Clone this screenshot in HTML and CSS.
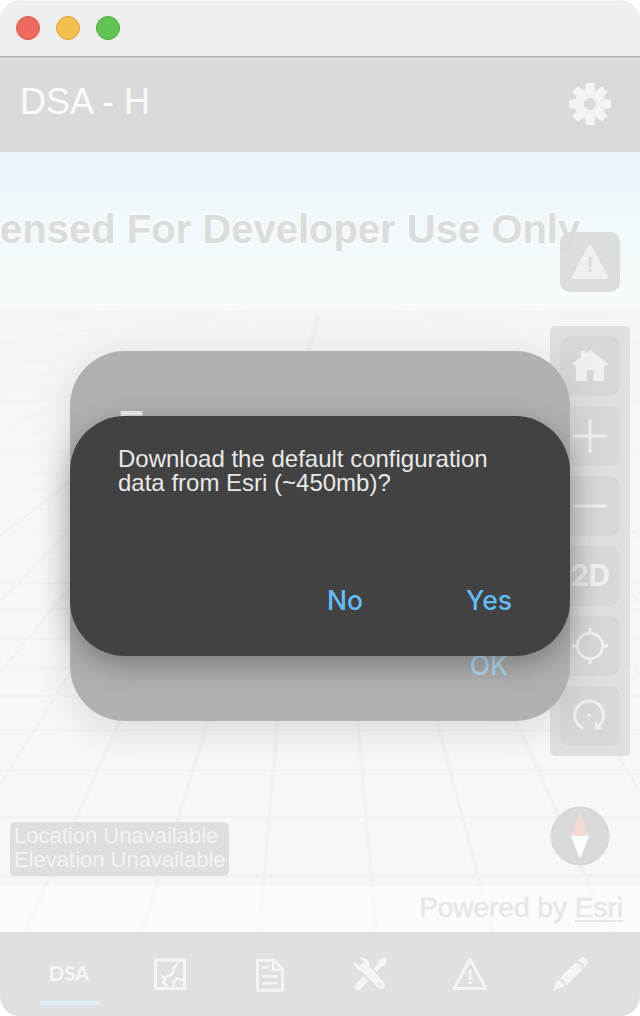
FILE: index.html
```html
<!DOCTYPE html>
<html lang="en">
<head>
<meta charset="utf-8">
<title>DSA - H</title>
<link rel="stylesheet" href="styles.css">
</head>
<body>
<div class="window">
  <div class="titlebar"><span class="light close"></span><span class="light minimize"></span><span class="light expand"></span></div>
  <header class="header">
    <h1 class="title">DSA - H</h1>
    <svg class="gear" viewBox="-22 -22 44 44">
      <circle r="10.3" fill="none" stroke="currentColor" stroke-width="8.4"/>
      <g fill="currentColor">
        <path id="tooth" d="M-5.500-12L-4-20.500Q-4-21-3.500-21H3.500Q4-21 4-20.500L5.500-12z"/>
        <use href="#tooth" transform="rotate(45)"/><use href="#tooth" transform="rotate(90)"/><use href="#tooth" transform="rotate(135)"/><use href="#tooth" transform="rotate(180)"/><use href="#tooth" transform="rotate(225)"/><use href="#tooth" transform="rotate(270)"/><use href="#tooth" transform="rotate(315)"/>
      </g>
    </svg>
  </header>
  <main class="scene">
    <svg class="grid" viewBox="0 152 640 780">
      <g class="lines far">
        <path d="M0 321Q60 314 120 311M0 344Q110 325 248 310M0 372L170 322M140 350Q175 337 210 328M0 396L95 352M0 433L70 394M0 487L70 437M640 321Q570 314 520 311M640 344Q530 325 392 310M640 372L470 322M500 350Q465 337 425 328M640 396L545 352M640 433L570 394M640 487L570 437"/>
        <path d="M0 342H640M0 352H640M0 362H640M0 374H640M0 387H640M0 401H640M0 416H640M0 433H640M0 452H640M0 473H640M0 490H640M0 510H640M0 531H640M0 553H640"/>
      </g>
      <g class="lines near">
        <path class="rows" d="M0 583H640M0 609H640M0 639H640M0 668H640M0 696H640M0 730H640M0 770H640M0 817H640"/>
        <path d="M0 536L70 482M0 601L70 530M0 672L70 588M0 785L115 600M640 792L524 600M640 676L570 592M640 603L570 532M640 537L570 483"/>
        <path class="mid" d="M25 932L160 631M142 932L237 631M259 932L286 631M376 932L350 631M493 932L413 631M610 932L476 631"/>
        <path class="mid" d="M0 875.500H640"/>
        <path class="apex" d="M316 315H322L311 351H305z"/>
      </g>
    </svg>
    <div class="watermark">ensed For Developer Use Only</div>
    <button class="tool alert"><svg viewBox="0 0 60 60"><path fill="currentColor" stroke="currentColor" stroke-width="4" stroke-linejoin="round" d="M30 14.800L46 45H14z"/><path class="cut" d="M28.500 25h3v10h-3zM28.500 37.300h3v2.700h-3z"/></svg></button>
    <div class="toolbar">
      <button class="tool"><svg viewBox="0 0 60 60"><path fill="currentColor" d="M30 14L47.700 27.500L45.700 30L44 28.800V45H33.300V34H27V45H16V28.800L14.300 30L12.300 27.500L21 20.900V15H25.500V17.400z"/></svg></button>
      <button class="tool"><svg viewBox="0 0 60 60"><path class="stroke" d="M13.500 30h33M30 13.300v33.400"/></svg></button>
      <button class="tool"><svg viewBox="0 0 60 60"><path class="stroke" d="M13.500 30h33"/></svg></button>
      <button class="tool mode">2D</button>
      <button class="tool"><svg viewBox="0 0 60 60"><g class="stroke"><circle cx="30" cy="30" r="12.700"/><path d="M30 12v6M30 42v6M12 30h6M42 30h6"/></g></svg></button>
      <button class="tool"><svg viewBox="0 0 60 60"><path class="stroke" d="M23.200 42.300A14.300 14.300 0 1 1 37.300 41"/><path fill="currentColor" d="M35.300 35.300L42.700 43.200L34.500 43.500zM27.800 27.800h3v3h-3z"/></svg></button>
    </div>
    <div class="location"><div class="lat">Location Unavailable</div><div class="elev">Elevation Unavailable</div></div>
    <svg class="compass" viewBox="-30 -30 60 60"><circle r="29.500"/><path class="north" d="M-9 0L0-23.500L9 0z"/><path class="south" d="M-9 0L0 23.500L9 0z"/></svg>
    <div class="attribution"><span class="credit">Powered by <u>Esri</u></span></div>
  </main>
  <nav class="tabs">
    <a class="tab active">DSA</a>
    <a class="tab"><svg viewBox="0 0 40 40"><g class="stroke"><rect x="5.500" y="6" width="29" height="28.500"/><path class="thin" d="M28.300 7.500L26 11.500L23.700 14L23.300 17L21.500 21L18 21.500L16 23.500L12.700 22.500L15 26L13 28.500L16.500 31L16 33.500M23.300 33.500L23.800 28L27.300 24L30 26L33 25.500"/></g></svg></a>
    <a class="tab"><svg viewBox="0 0 40 40"><g class="stroke"><path d="M7.500 6.200H23.500L32.600 15V36.200H7.500z"/><path class="thin" d="M23.200 7V15.700H32M12 13.500h6.500M12 22.300h15.700M12 29.200h15.700"/></g></svg></a>
    <a class="tab"><svg viewBox="0 0 40 40"><g stroke="currentColor" fill="none"><path stroke-width="7" stroke-linecap="round" d="M8 32.500L16 24.500"/></g><path fill="currentColor" d="M22.500 15.800L27.700 10.500L28.500 6.500L34.500 2.800L37.500 6L34 12L30.700 13L25.500 18.800z"/><path class="halo" d="M15 14L31 31.500"/><path fill="none" stroke="currentColor" stroke-width="8.500" stroke-linecap="round" d="M14 13L30.800 31.200"/><path fill="currentColor" d="M9 3.800A8.600 8.600 0 0 1 19.500 13.500L13 17.500A8.600 8.600 0 0 1 4.300 7.500L9.500 12L13.300 11.500L14 7.500z"/><circle class="cut" cx="30" cy="30.500" r="1.400"/></svg></a>
    <a class="tab"><svg viewBox="0 0 40 40"><path class="stroke round" d="M20 5.300L35.800 34.500H4.200z"/><path fill="currentColor" d="M18.500 15.300h3v10.300h-3z"/><circle fill="currentColor" cx="20" cy="28.800" r="1.800"/></svg></a>
    <a class="tab"><svg viewBox="0 0 40 40"><path fill="currentColor" d="M2.700 37.300L7 26Q12 26.500 14.700 32zM9.700 24.500L25.500 8.700Q31 9 32.700 15.500L17 31Q14.500 26 9.700 24.500zM27.300 6.800L30 4.200Q33 1.500 36 4.500Q39 7.500 36.700 11L34.300 13.500Q32.500 8 27.300 6.800z"/></svg></a>
  </nav>
  <section class="dialog under"><div class="heading">E</div><button class="action ok">OK</button></section>
  <section class="dialog prompt">
    <p class="message">Download the default configuration<br>data from Esri (~450mb)?</p>
    <div class="actions"><button class="action">No</button><button class="action">Yes</button></div>
  </section>
</div>
</body>
</html>
```
FILE: styles.css
```css
* { box-sizing: border-box; }
body { margin: 0; background: #fff; font-family: "Liberation Sans", Arial, sans-serif; }
button { border: 0; padding: 0; margin: 0; background: none; font: inherit; color: inherit; }
.window { position: relative; width: 640px; height: 1016px; border-radius: 20px; overflow: hidden; display: flex; flex-direction: column; background: #f6f6f6; }
.titlebar { height: 57px; flex: none; display: flex; gap: 16px; padding: 16px; background: #efefef; border-bottom: 1px solid #b2b2b2; box-shadow: inset 0 1px #f7f7f7; }
.light { width: 24px; height: 24px; border-radius: 50%; border: 1px solid; }
.close { background: #ed6a5e; border-color: #d5564c; }
.minimize { background: #f5bf4f; border-color: #d8a243; }
.expand { background: #61c554; border-color: #4ea73e; }
.header { height: 95px; flex: none; display: flex; justify-content: space-between; align-items: flex-start; padding: 23px 28px 0 20px; background: #dadada; border-top: 1px solid #cecece; color: #fafafa; }
.title { margin: 0; font-size: 36px; font-weight: 400; line-height: 42px; }
.gear { width: 44px; height: 44px; margin-top: 1px; color: #f4f4f4; }
.scene { position: relative; height: 780px; flex: none; overflow: hidden; background: linear-gradient(#ebf3fc 0, #ecf4fa 22px, #eef7fa 45px, #f2f9fc 90px, #f5fafb 125px, #f7fbfb 158px, #f5f5f5 158px, #f7f7f7 320px); }
.grid { position: absolute; inset: 0; width: 640px; height: 780px; }
.lines { fill: none; stroke: #f1f1f1; }
.far { stroke-width: 1; stroke: #f3f3f3; }
.near { stroke-width: 2.5; }
.rows { stroke-width: 2; stroke: #f2f2f2; }
.mid { stroke-width: 4; }
.apex { fill: #f0f0f0; stroke: none; }
.watermark { position: absolute; left: 0; top: 54px; white-space: nowrap; font-size: 40px; font-weight: 700; line-height: 46px; color: #dbdddc; -webkit-text-stroke: 4px #f7fafa; paint-order: stroke fill; }
.tool { display: flex; align-items: center; justify-content: center; width: 60px; height: 60px; border-radius: 10px; background: rgba(210, 210, 210, .55); color: #f0f0f0; }
.tool svg { width: 60px; height: 60px; }
.alert { position: absolute; left: 560px; top: 80px; background: rgba(218, 220, 219, .94); }
.cut { fill: #dadbda; }
.stroke { fill: none; stroke: currentColor; stroke-width: 3; }
.toolbar { position: absolute; left: 550px; top: 174px; width: 80px; display: flex; flex-direction: column; gap: 10px; padding: 10px; border-radius: 5px; background: rgba(218, 218, 218, .78); }
.mode { font-family: Inter, sans-serif; font-size: 30px; font-weight: 700; padding-bottom: 2px; letter-spacing: -.6px; }
.location { position: absolute; left: 10px; top: 670px; width: 219px; height: 54px; padding: 2px 4px; border-radius: 5px; background: #dedede; color: #f3f3f3; font-size: 22px; line-height: 24px; white-space: nowrap; }
.compass { position: absolute; left: 550px; top: 654px; width: 60px; height: 60px; fill: #d9d9d9; }
.north { fill: #f1ddd6; }
.south { fill: #fcfcfc; }
.attribution { position: absolute; left: 0; right: 0; bottom: 0; height: 46px; padding-right: 17px; text-align: right; background: rgba(253, 253, 253, .62); color: #e6e6e6; font-size: 28px; line-height: 44px; -webkit-text-stroke: .5px #e6e6e6; }
.attribution u { text-decoration-thickness: 2px; text-underline-offset: 3px; }
.tabs { flex: none; height: 84px; padding: 0 20px; display: grid; grid-template-columns: repeat(6, 100px); background: #e0e0e0; color: #f5f5f5; }
.tab { height: 73px; display: flex; align-items: center; justify-content: center; padding-top: 11px; }
.tab svg { width: 40px; height: 40px; }
.tab .stroke { stroke-width: 3; }
.tab .thin { stroke-width: 2.4; }
.tab .round { stroke-width: 3; stroke-linejoin: round; }
.tab .cut { fill: #e0e0e0; }
.tab .halo { fill: none; stroke: #e0e0e0; stroke-width: 12; }
.active { width: 60px; justify-self: center; border-bottom: 4px solid #e1effa; font-family: Lato, sans-serif; font-size: 20.5px; font-weight: 900; padding: 12px 2px 0 0; }
.dialog { position: absolute; left: 70px; width: 500px; border-radius: 55px; display: flex; flex-direction: column; }
.under { top: 351px; height: 370px; padding: 51px 48px 0; background: #b0b0b0; box-shadow: 0 8px 40px rgba(0, 0, 0, .12); color: #ededed; }
.heading { height: 46px; font-size: 40px; font-weight: 700; line-height: 46px; }
.prompt { top: 416px; height: 240px; padding: 31px 48px 0; background: #424242; color: #e9e9e9; box-shadow: 0 9px 28px rgba(0, 0, 0, .3); }
.message { margin: 0; font-size: 24px; line-height: 24px; white-space: nowrap; }
.actions { display: grid; grid-template-columns: 114px 114px; justify-content: end; column-gap: 30px; margin: 87px -24px 0 0; }
.action { height: 36px; font-family: Inter, sans-serif; font-size: 26.5px; line-height: 36px; font-weight: 500; color: #64bdfb; }
.ok { align-self: flex-end; width: 114px; margin: 199px -24px 0 0; color: #b3daf5; }
```
